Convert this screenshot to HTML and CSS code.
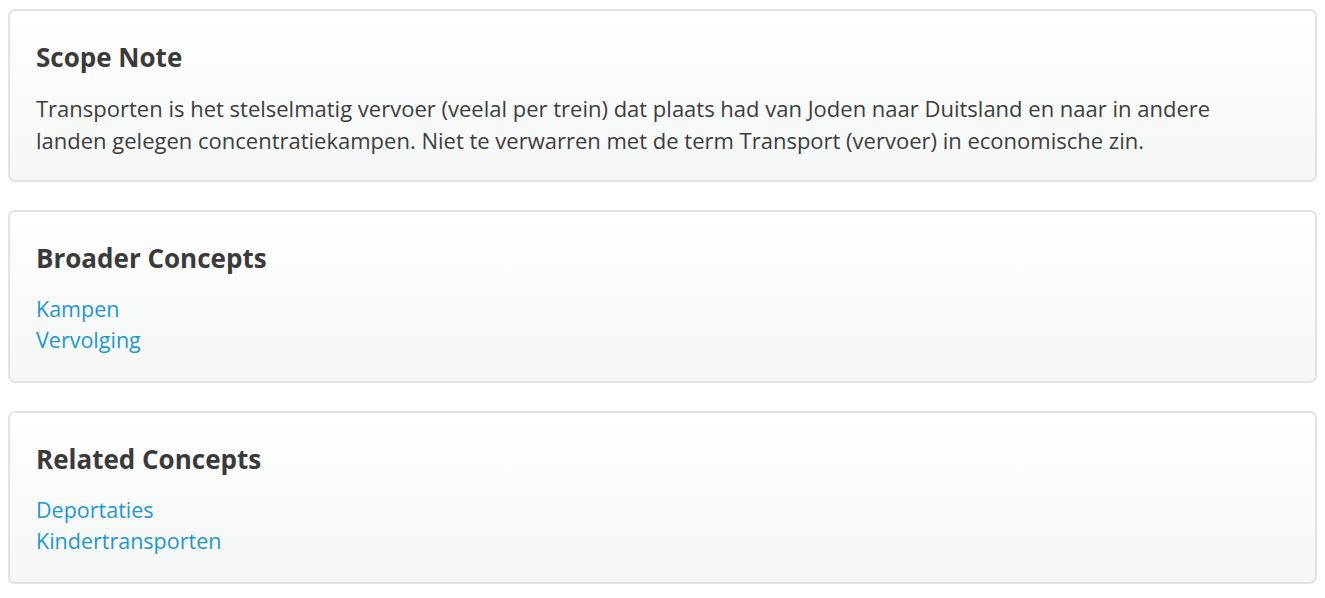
FILE: index.html
```html
<!DOCTYPE html>
<html lang="nl">
<head>
<meta charset="utf-8">
<title>Transporten</title>
<link rel="stylesheet" href="styles.css">
</head>
<body>
<div class="page">
  <section class="card">
    <h2 class="card-title">Scope Note</h2>
    <p class="card-text">Transporten is het stelselmatig vervoer (veelal per trein) dat plaats had van Joden naar Duitsland en naar in andere landen gelegen concentratiekampen. Niet te verwarren met de term Transport (vervoer) in economische zin.</p>
  </section>
  <section class="card">
    <h2 class="card-title">Broader Concepts</h2>
    <ul class="links">
      <li><a href="#">Kampen</a></li>
      <li><a href="#">Vervolging</a></li>
    </ul>
  </section>
  <section class="card">
    <h2 class="card-title">Related Concepts</h2>
    <ul class="links">
      <li><a href="#">Deportaties</a></li>
      <li><a href="#">Kindertransporten</a></li>
    </ul>
  </section>
</div>
</body>
</html>
```
FILE: styles.css
```css
html, body {
  margin: 0;
  background: #fff;
}
body {
  padding: 9px 8px 0 8px;
  font-family: "Open Sans", "Noto Sans", sans-serif;
  color: #3d3d3d;
}
.page {
  display: flex;
  flex-direction: column;
  gap: 28px;
}
.card {
  border: 2px solid #e3e3e3;
  border-radius: 7px;
  background: linear-gradient(to bottom, #ffffff, #f5f6f6);
  padding: 28px 34px 0 26px;
  height: 173px;
  box-sizing: border-box;
}
.card-title {
  margin: 0 0 17px 0;
  font-size: 26px;
  line-height: 36px;
  font-weight: 700;
  color: #3a3a3a;
}
.card-text {
  margin: 0;
  font-size: 22px;
  line-height: 32px;
  color: #3d3d3d;
}
.links {
  list-style: none;
  margin: 0;
  padding: 0;
  font-size: 21.5px;
  line-height: 31px;
}
.links a {
  color: #1f97cc;
  text-decoration: none;
}
```
